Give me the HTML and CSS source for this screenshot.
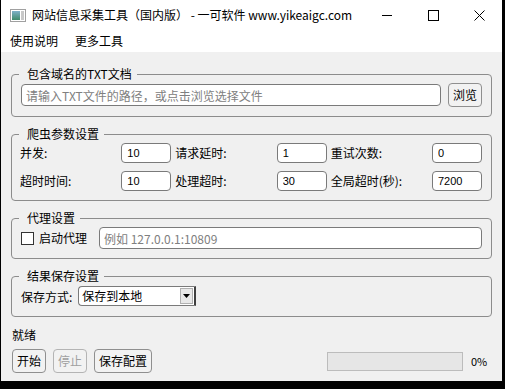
FILE: index.html
```html
<!DOCTYPE html>
<html lang="zh-CN">
<head>
    <meta charset="UTF-8">
    <title>网站信息采集工具</title>
    <link rel="stylesheet" href="styles.css">
</head>
<body>
    <div class="window">
        <!-- Title bar -->
        <div class="titlebar">
            <svg class="app-icon" width="16" height="13" viewBox="0 0 16 13">
                <defs>
                    <linearGradient id="pane" x1="0" y1="0" x2="0" y2="1">
                        <stop offset="0" stop-color="#7fb0c8"/>
                        <stop offset="1" stop-color="#3f8a6a"/>
                    </linearGradient>
                </defs>
                <rect x="0.5" y="0.5" width="15" height="12" fill="#fff" stroke="#a0a0a0"/>
                <rect x="2" y="2" width="8" height="9" fill="url(#pane)"/>
                <rect x="11" y="2" width="3" height="9" fill="#c8c8c8"/>
            </svg>
            <span class="title">网站信息采集工具（国内版） - 一可软件 www.yikeaigc.com</span>
            <div class="caption-buttons">
                <span class="cap-btn">
                    <svg width="10" height="10" viewBox="0 0 10 10"><path d="M0 5.5H10" stroke="#000" stroke-width="1"/></svg>
                </span>
                <span class="cap-btn">
                    <svg width="11" height="11" viewBox="0 0 11 11"><rect x="0.5" y="0.5" width="10" height="10" fill="none" stroke="#000"/></svg>
                </span>
                <span class="cap-btn">
                    <svg width="11" height="11" viewBox="0 0 11 11"><path d="M0.5 0.5L10.5 10.5M10.5 0.5L0.5 10.5" stroke="#000" stroke-width="1"/></svg>
                </span>
            </div>
        </div>

        <!-- Menu bar -->
        <div class="menubar">
            <span class="menu-item">使用说明</span>
            <span class="menu-item">更多工具</span>
        </div>

        <div class="client">
            <fieldset class="group">
                <legend>包含域名的TXT文档</legend>
                <div class="file-row">
                    <input class="text-input" type="text" placeholder="请输入TXT文件的路径，或点击浏览选择文件">
                    <button class="btn">浏览</button>
                </div>
            </fieldset>

            <fieldset class="group">
                <legend>爬虫参数设置</legend>
                <div class="param-grid">
                    <label>并发:</label>
                    <input class="spin-input" type="text" value="10">
                    <label>请求延时:</label>
                    <input class="spin-input" type="text" value="1">
                    <label>重试次数:</label>
                    <input class="spin-input" type="text" value="0">
                    <label>超时时间:</label>
                    <input class="spin-input" type="text" value="10">
                    <label>处理超时:</label>
                    <input class="spin-input" type="text" value="30">
                    <label>全局超时(秒):</label>
                    <input class="spin-input" type="text" value="7200">
                </div>
            </fieldset>

            <fieldset class="group">
                <legend>代理设置</legend>
                <div class="proxy-row">
                    <span class="checkbox"></span>
                    <span class="check-label">启动代理</span>
                    <input class="text-input proxy-input" type="text" placeholder="例如 127.0.0.1:10809">
                </div>
            </fieldset>

            <fieldset class="group">
                <legend>结果保存设置</legend>
                <div class="save-row">
                    <span>保存方式:</span>
                    <div class="combo">
                        <span class="combo-text">保存到本地</span>
                        <span class="combo-arrow">
                            <svg width="7" height="4" viewBox="0 0 7 4"><path d="M0 0H7L3.5 4Z" fill="#000"/></svg>
                        </span>
                    </div>
                </div>
            </fieldset>

            <div class="status">就绪</div>

            <div class="action-row">
                <button class="btn">开始</button>
                <button class="btn" disabled>停止</button>
                <button class="btn">保存配置</button>
                <div class="progress"></div>
                <span class="percent">0%</span>
            </div>
        </div>
    </div>
</body>
</html>
```

FILE: styles.css
```css
body {
    margin: 0;
    background: #000;
    font-family: "Noto Sans CJK SC", "Liberation Sans", sans-serif;
    font-size: 12px;
    color: #000;
}
.window {
    margin-left: 1px;
    width: 501px;
    height: 381px;
    display: flex;
    flex-direction: column;
    background: #f0f0f0;
}
.titlebar {
    height: 30px;
    background: #fff;
    display: flex;
    align-items: center;
}
.app-icon {
    margin-left: 9px;
    margin-right: 6px;
}
.title {
    line-height: 16px;
    white-space: pre;
}
.caption-buttons {
    margin-left: auto;
    display: flex;
    height: 30px;
}
.cap-btn {
    width: 46px;
    height: 30px;
    display: flex;
    align-items: center;
    justify-content: center;
}
.menubar {
    height: 22px;
    background: #fff;
    display: flex;
    align-items: center;
    padding-left: 9px;
    gap: 17px;
    line-height: 16px;
}
.client {
    flex: 1;
    display: flex;
    flex-direction: column;
    padding: 15px 10px 0;
}
.group {
    margin: 0 0 10px;
    padding: 2px 9px 9px;
    border: 1px solid #8c8c8c;
    border-radius: 4px;
    min-width: 0;
}
.group legend {
    margin-left: -2px;
    padding: 0 5px 0 8px;
    line-height: 14px;
    height: 14px;
}
.file-row {
    display: flex;
    align-items: center;
    gap: 7px;
    height: 24px;
}
.text-input {
    flex: 1;
    height: 22px;
    box-sizing: border-box;
    border: 1px solid #7a7a7a;
    border-radius: 4px;
    background: #fff;
    padding: 0 4px;
    font-family: "Noto Sans CJK SC", "Liberation Sans", sans-serif;
    font-size: 12px;
    outline: none;
}
.text-input::placeholder {
    color: #808080;
}
.btn {
    height: 24px;
    box-sizing: border-box;
    padding: 0 4px;
    border: 1px solid #8f8f8f;
    border-radius: 4px;
    background: #f2f2f2;
    font-family: "Noto Sans CJK SC", "Liberation Sans", sans-serif;
    font-size: 12px;
    line-height: 14px;
    color: #000;
}
.btn:disabled {
    color: #a0a0a0;
    border-color: #b4b4b4;
}
.param-grid {
    display: grid;
    grid-template-columns: 1fr 50px 1fr 50px 1fr 50px;
    grid-auto-rows: 20px;
    column-gap: 4px;
    row-gap: 8px;
    align-items: center;
    margin-left: -1px;
}
.param-grid label {
    line-height: 14px;
    white-space: nowrap;
}
.spin-input {
    width: 50px;
    height: 20px;
    box-sizing: border-box;
    border: 1px solid #7a7a7a;
    border-radius: 4px;
    background: #fff;
    padding: 0 5px;
    font-family: "Liberation Sans", sans-serif;
    font-size: 11px;
    outline: none;
}
.proxy-row {
    display: flex;
    align-items: center;
    height: 22px;
}
.checkbox {
    width: 13px;
    height: 13px;
    box-sizing: border-box;
    border: 1px solid #333;
    background: #fff;
    margin-right: 5px;
}
.check-label {
    line-height: 14px;
    margin-right: 12px;
}
.proxy-input {
    height: 22px;
}
.save-row {
    display: flex;
    align-items: center;
    gap: 6px;
    height: 22px;
}
.combo {
    width: 118px;
    height: 20px;
    box-sizing: border-box;
    border: 1px solid #7a7a7a;
    border-right: 2px solid #404040;
    border-radius: 4px 0 0 4px;
    background: #fff;
    display: flex;
    align-items: center;
}
.combo-text {
    flex: 1;
    padding-left: 3px;
    line-height: 14px;
}
.combo-arrow {
    width: 13px;
    height: 16px;
    margin-right: 1px;
    box-sizing: border-box;
    border: 1px solid #b0b0b0;
    background: #e8e8e8;
    display: flex;
    align-items: center;
    justify-content: center;
}
.status {
    line-height: 14px;
    margin-top: 1px;
    margin-left: 1px;
}
.action-row {
    display: flex;
    align-items: center;
    gap: 7px;
    margin-top: 7px;
    margin-left: 1px;
}
.progress {
    margin-left: auto;
    width: 136px;
    height: 19px;
    box-sizing: border-box;
    border: 1px solid #bcbcbc;
    background: #e6e6e6;
}
.percent {
    width: 21px;
    margin-left: 1px;
    font-size: 11px;
    line-height: 14px;
}
```
